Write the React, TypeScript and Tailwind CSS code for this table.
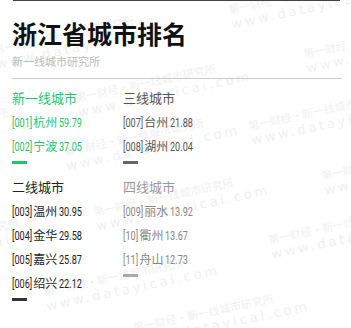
import React, { useLayoutEffect, useRef, useState } from 'react';

type Row = { code: string; city: string; score: string };

type Tier = {
  title: string;
  rows: Row[];
  head: string;
  text: string;
  bar: string;
};

const tiers: Tier[] = [
  {
    title: '新一线城市',
    rows: [
      { code: '[001]', city: '杭州', score: '59.79' },
      { code: '[002]', city: '宁波', score: '37.05' },
    ],
    head: 'text-[#1fc46b]',
    text: 'text-[#1fc46b]',
    bar: 'bg-[#1fc46b]',
  },
  {
    title: '三线城市',
    rows: [
      { code: '[007]', city: '台州', score: '21.88' },
      { code: '[008]', city: '湖州', score: '20.04' },
    ],
    head: 'text-[#555555]',
    text: 'text-[#555555]',
    bar: 'bg-[#666666]',
  },
  {
    title: '二线城市',
    rows: [
      { code: '[003]', city: '温州', score: '30.95' },
      { code: '[004]', city: '金华', score: '29.58' },
      { code: '[005]', city: '嘉兴', score: '25.87' },
      { code: '[006]', city: '绍兴', score: '22.12' },
    ],
    head: 'text-[#222222]',
    text: 'text-[#222222]',
    bar: 'bg-[#333333]',
  },
  {
    title: '四线城市',
    rows: [
      { code: '[009]', city: '丽水', score: '13.92' },
      { code: '[10]', city: '衢州', score: '13.67' },
      { code: '[11]', city: '舟山', score: '12.73' },
    ],
    head: 'text-[#999999]',
    text: 'text-[#888888]',
    bar: 'bg-[#aaaaaa]',
  },
];

// watermark spots, placed by eye
const marks = [
  [230, 4],
  [305, 48],
  [77, 92],
  [250, 120],
  [65, 146],
  [95, 206],
  [323, 170],
  [270, 234],
  [45, 286],
  [135, 322],
  [-120, 246],
  [-5, 44],
  [-130, 136],
  [150, -24],
];

const cjk = '"Noto Sans CJK SC", "Noto Sans", sans-serif';

const SQUEEZE = 0.7;

// condensed digits: no narrow face installed, so squeeze Roboto and size the box to match
function Narrow({ children }: { children: string }) {
  const inner = useRef<HTMLSpanElement>(null);
  const [w, setW] = useState<number | undefined>(undefined);

  useLayoutEffect(() => {
    const measure = () => {
      if (inner.current) setW(inner.current.offsetWidth * SQUEEZE);
    };
    measure();
    document.fonts?.ready.then(measure);
  }, [children]);

  return (
    <span className="inline-block whitespace-nowrap" style={{ width: w }}>
      <span
        ref={inner}
        className="inline-block origin-left scale-x-[0.7] text-[13px] font-['Roboto']">
        {children}
      </span>
    </span>
  );
}

function Watermark() {
  return (
    <div className="absolute inset-0 overflow-hidden pointer-events-none">
      {marks.map(([x, y], i) => (
        <div
          key={i}
          className="absolute origin-left -rotate-[12deg] text-[#f0f0f0] whitespace-nowrap leading-none"
          style={{ left: x, top: y }}>
          <div className="text-[11px] font-['Noto_Sans_CJK_SC']">第一财经·新一线城市研究所</div>
          <div className="text-[13px] tracking-[3px] mt-[3px] font-['DejaVu_Sans']">www.datayicai.com</div>
        </div>
      ))}
    </div>
  );
}

function TierBlock({ tier }: { tier: Tier }) {
  return (
    <div className="flex flex-col">
      <div className={`h-6 leading-6 text-[13px] ${tier.head}`} style={{ fontFamily: cjk }}>
        {tier.title}
      </div>
      {tier.rows.map((r) => (
        <div key={r.code} className={`h-6 flex items-center text-[12px] leading-none ${tier.text}`}>
          <Narrow>{r.code}</Narrow>
          <span className="ml-px" style={{ fontFamily: cjk }}>
            {r.city}
          </span>
          <span className="ml-[2px] flex">
            <Narrow>{r.score}</Narrow>
          </span>
        </div>
      ))}
      <div className={`mt-[3px] h-[3px] w-[15px] ${tier.bar}`} />
    </div>
  );
}

export default function App() {
  return (
    <div className="relative w-[351px] h-[328px] bg-white overflow-hidden" style={{ fontFamily: cjk }}>
      <Watermark />
      <div className="relative">
        <div className="ml-[13px] w-[327px] h-px bg-[#444444]" />
        <div className="pl-3">
          <h1 className="mt-[20px] text-[25px] leading-[25px] font-bold text-[#111111]">浙江省城市排名</h1>
          <p className="mt-[10px] text-[11px] leading-[11px] text-[#bbbbbb]">新一线城市研究所</p>
          <div className="mt-[11px] w-[330px] h-px bg-[#cccccc]" />
          <div className="mt-[7px] grid grid-cols-[111px_1fr] gap-y-[11px]">
            {tiers.map((t) => (
              <TierBlock key={t.title} tier={t} />
            ))}
          </div>
        </div>
      </div>
    </div>
  );
}
